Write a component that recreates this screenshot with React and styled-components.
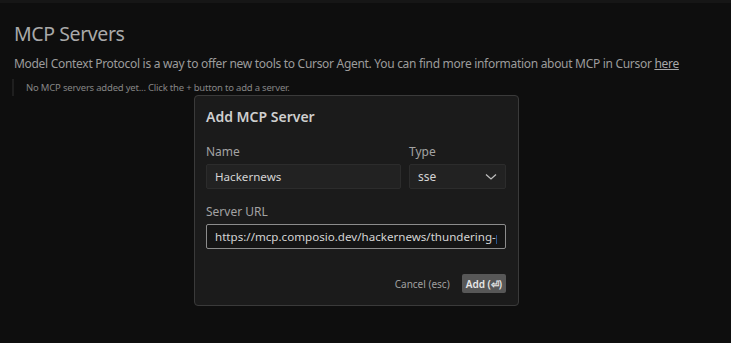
import React from "react";
import styled, { createGlobalStyle } from "styled-components";

const Global = createGlobalStyle`
  html, body { margin: 0; padding: 0; background: #0e0e0e; }
  body { font-family: "Noto Sans", "Open Sans", sans-serif; }
  * { box-sizing: border-box; }
`;

const Page = styled.div`
  width: 731px;
  height: 343px;
  background: #0e0e0e;
  border-top: 3px solid #161616;
  position: relative;
  overflow: hidden;
`;

const Content = styled.div`
  padding: 17px 14px 0 14px;
`;

const Title = styled.h1`
  margin: 0;
  font-size: 19.5px;
  font-weight: 400;
  color: #a9a9a9;
  letter-spacing: -0.4px;
  line-height: 28px;
`;

const Desc = styled.p`
  margin: 7px 0 0;
  font-size: 12px;
  color: #9c9c9c;
  letter-spacing: -0.3px;
  line-height: 18px;
  a { color: #a8a8a8; text-decoration: underline; }
`;

const Notice = styled.div`
  margin: 6px 0 0 -2px;
  border-left: 2px solid #1f1f1f;
  padding: 2px 0 2px 12px;
  font-size: 9.5px;
  color: #858585;
  letter-spacing: -0.2px;
  line-height: 13px;
`;

const Dialog = styled.div`
  position: absolute;
  left: 194px;
  top: 92px;
  width: 325px;
  height: 211px;
  background: #1b1b1b;
  border: 1px solid #3a3a3a;
  border-radius: 4px;
  padding: 11px 12px 0 11px;
  display: flex;
  flex-direction: column;
`;

const DialogTitle = styled.div`
  font-size: 14px;
  font-weight: 600;
  color: #cfcfcf;
  line-height: 20px;
`;

const Row = styled.div`
  display: flex;
  gap: 8px;
  margin-top: ${p => p.$mt}px;
`;

const Field = styled.div`
  display: flex;
  flex-direction: column;
  gap: 5px;
  width: ${p => p.$w}px;
`;

const Label = styled.div`
  font-size: 12px;
  color: #a3a3a3;
  line-height: 14px;
`;

const Box = styled.div`
  height: 25px;
  background: #222222;
  border: 1px solid #2c2c2c;
  border-radius: 2px;
  padding: 0 8px;
  display: flex;
  align-items: center;
  justify-content: space-between;
  font-size: 12px;
  color: #d4d4d4;
  white-space: nowrap;
`;

const TextInput = styled.input`
  height: 25px;
  width: 100%;
  background: ${p => (p.$focus ? "#151515" : "#222222")};
  border: 1px solid ${p => (p.$focus ? "#8c8c8c" : "#2c2c2c")};
  border-radius: 2px;
  padding: 0 8px;
  font-family: inherit;
  font-size: 11.6px;
  color: #d4d4d4;
  outline: none;
`;

const Footer = styled.div`
  margin-top: 25px;
  display: flex;
  justify-content: flex-end;
  align-items: center;
  gap: 12px;
`;

const Cancel = styled.div`
  font-size: 10px;
  color: #a0a0a0;
`;

const AddBtn = styled.div`
  background: #575757;
  color: #e8e8e8;
  font-size: 10px;
  font-weight: 600;
  height: 19px;
  padding: 0 4px;
  border-radius: 2px;
  display: flex;
  align-items: center;
`;

export default function App() {
  return (
    <>
      <Global />
      <Page>
        <Content>
          <Title>MCP Servers</Title>
          <Desc>
            Model Context Protocol is a way to offer new tools to Cursor Agent. You can find more information about MCP in Cursor <a>here</a>
          </Desc>
          <Notice>No MCP servers added yet... Click the + button to add a server.</Notice>
        </Content>
        <Dialog>
          <DialogTitle>Add MCP Server</DialogTitle>
          <Row $mt={18}>
            <Field $w={195}>
              <Label>Name</Label>
              <TextInput readOnly value="Hackernews" />
            </Field>
            <Field $w={97}>
              <Label>Type</Label>
              <Box>
                <span>sse</span>
                <svg width="12" height="8" viewBox="0 0 12 8">
                  <path d="M1 1.5 L6 6 L11 1.5" fill="none" stroke="#bdbdbd" strokeWidth="1.3" />
                </svg>
              </Box>
            </Field>
          </Row>
          <Row $mt={16}>
            <Field $w={300}>
              <Label>Server URL</Label>
              <TextInput $focus readOnly value="https://mcp.composio.dev/hackernews/thundering-penguin" />
            </Field>
          </Row>
          <Footer>
            <Cancel>Cancel (esc)</Cancel>
            <AddBtn>Add (⏎)</AddBtn>
          </Footer>
        </Dialog>
      </Page>
    </>
  );
}
